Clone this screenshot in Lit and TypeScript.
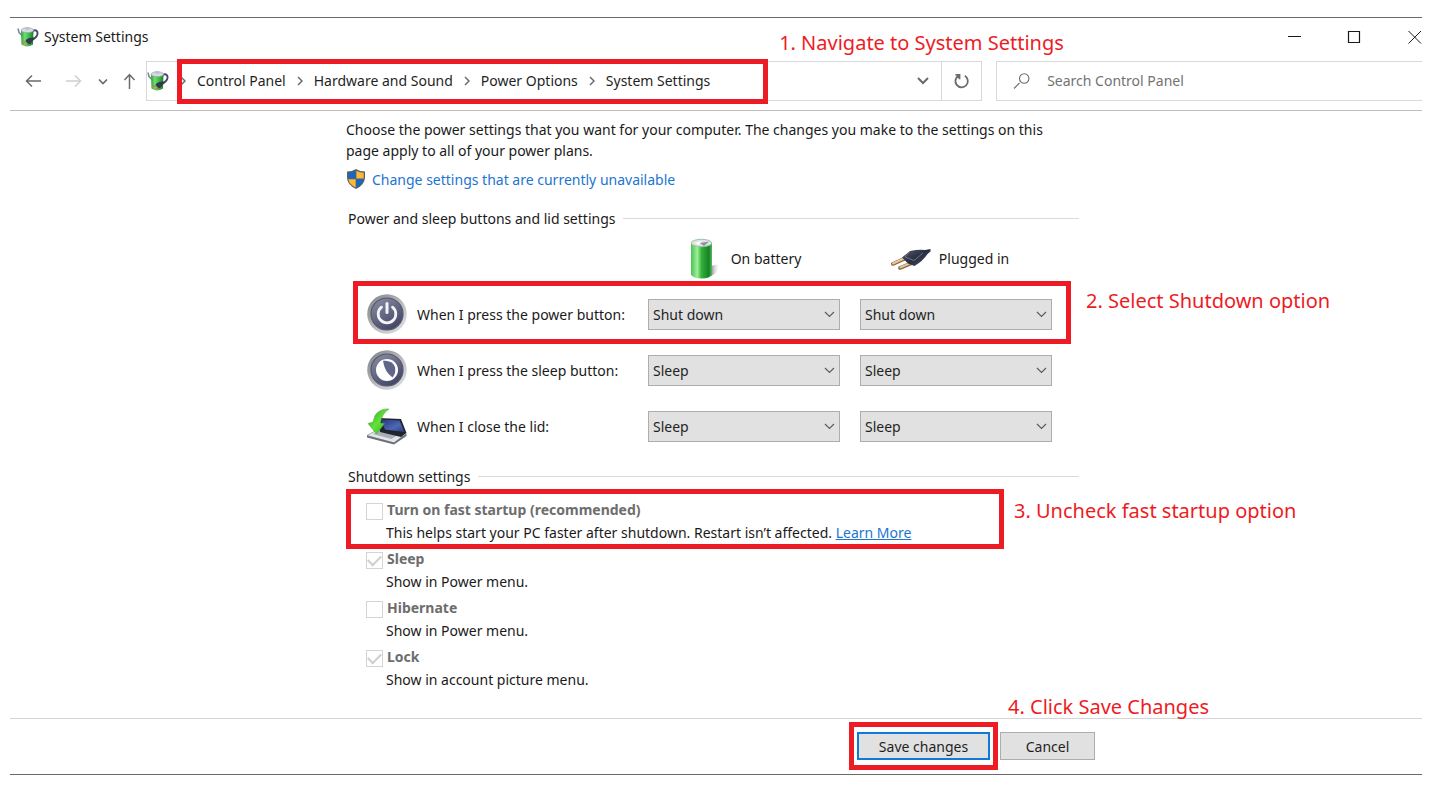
import { LitElement, html, css, svg, nothing } from "lit";
import { customElement, property } from "lit/decorators.js";

const kettleIcon = html`<svg width="22" height="22" viewBox="0 0 22 22" aria-hidden="true">
  <defs>
    <linearGradient id="kettle-body" x1="0" x2="1">
      <stop offset="0" stop-color="#2f9a3a" /><stop offset=".3" stop-color="#6be06f" />
      <stop offset=".7" stop-color="#35b443" /><stop offset="1" stop-color="#1f7a2c" />
    </linearGradient>
  </defs>
  <path d="M15.500 5C19.500 2.800 21.500 6 20 9.500C19 11.500 17.500 12.500 16 13.500" fill="none" stroke="#45486a" stroke-width="1.900" />
  <path d="M1 2.500L2 6.500L5 9.500" fill="none" stroke="#7d8696" stroke-width="1.500" />
  <path d="M4 4.500L4.500 18.500Q10 22.500 16 18.500L16.500 4.500Z" fill="url(#kettle-body)" />
  <ellipse cx="10.300" cy="4.200" rx="6.200" ry="2.500" fill="#d5dbe0" stroke="#8d98a0" stroke-width=".6" />
  <ellipse cx="10.300" cy="2.400" rx="2.500" ry="1.300" fill="#b9c1c9" />
  <path d="M8.500 14.500Q11 11 17.500 11.500L17 13.500Q15 15 14 17.500L11 18.500Z" fill="#343a4c" />
  <path d="M9 15.500L5 17.500M11 17.500L8 19.500" stroke="#b48a52" stroke-width="1.500" />
</svg>`;

const shieldIcon = html`<svg width="20" height="22" viewBox="0 0 20 22" aria-hidden="true">
  <path d="M10 1Q6 3.600 1 3.600V10Q1.500 17 10 21Q18.500 17 19 10V3.600Q14 3.600 10 1Z" fill="#5c6066" />
  <path d="M9.600 2.800Q6.500 4.600 2.300 4.800V10.500H9.600Z" fill="#1668c1" />
  <path d="M10.400 2.800Q13.500 4.600 17.700 4.800V10.500H10.400Z" fill="#fdb83b" />
  <path d="M2.400 11.300H9.600V19.400Q3.200 16.300 2.400 11.300Z" fill="#fdb83b" />
  <path d="M17.600 11.300H10.400V19.400Q16.800 16.300 17.600 11.300Z" fill="#1668c1" />
</svg>`;

const batteryIcon = html`<svg width="40" height="42" viewBox="0 0 40 42" aria-hidden="true">
  <defs>
    <linearGradient id="battery-body" x1="0" x2="1">
      <stop offset="0" stop-color="#4fc155" /><stop offset=".3" stop-color="#9df09b" />
      <stop offset=".5" stop-color="#35b13c" /><stop offset=".85" stop-color="#138322" />
      <stop offset="1" stop-color="#5bb562" />
    </linearGradient>
    <linearGradient id="battery-shadow" x1="0" x2="1">
      <stop offset="0" stop-color="#8a8a8a" /><stop offset="1" stop-color="#fff" stop-opacity="0" />
    </linearGradient>
  </defs>
  <path d="M28 28Q36 25 37 28Q36 34 28 38Z" fill="url(#battery-shadow)" />
  <path d="M8 5V36.500Q10 40.500 18.500 40.500Q27 40.500 29 36.500V5Z" fill="url(#battery-body)" />
  <ellipse cx="18.500" cy="5" rx="10.300" ry="3.700" fill="#dfe5e3" stroke="#9cc4a0" />
  <path d="M17 5L26 3.500L21 8Z" fill="#8d8da4" />
  <path d="M12 5L18 3L16 7Z" fill="#fff" />
</svg>`;

const plugIcon = html`<svg width="40" height="40" viewBox="0 0 40 40" aria-hidden="true">
  <defs>
    <linearGradient id="plug-body" x1="0" x2="1" y1="0" y2="1">
      <stop offset="0" stop-color="#565c70" /><stop offset=".5" stop-color="#2a2e42" />
      <stop offset="1" stop-color="#4b5168" />
    </linearGradient>
  </defs>
  <path d="M1.800 25L14 19.500M9 29L21 24" stroke="#8a6642" stroke-width="3.600" stroke-linecap="round" />
  <path d="M2 24.500L14 19M9.500 28.300L21 23.300" stroke="#e8c7a0" stroke-width="2" stroke-linecap="round" />
  <path d="M11 18.500L19 12Q28 10 34 11L39.500 10V12.500L36.500 15Q32 22 23.500 27L17 24.500Z" fill="url(#plug-body)" />
  <path d="M19 12.500L14 18L23 21.500L32 14" fill="none" stroke="#7d849b" stroke-width=".8" />
</svg>`;

const disc = (id: string) => svg`
  <defs>
    <linearGradient id=${id + "-face"} x1="0" y1="0" x2=".6" y2="1">
      <stop offset="0" stop-color="#8d90a6" /><stop offset="1" stop-color="#454768" />
    </linearGradient>
    <linearGradient id=${id + "-rim"} x1="0" y1="0" x2="1" y2="1">
      <stop offset="0" stop-color="#7c7e80" /><stop offset=".6" stop-color="#bfc1c4" />
      <stop offset="1" stop-color="#e4e5e7" />
    </linearGradient>
  </defs>
  <circle cx="20" cy="20" r="19.800" fill=${`url(#${id}-rim)`} />
  <circle cx="20" cy="20" r="16" fill=${`url(#${id}-face)`} stroke="#55576f" stroke-width="1.200" />`;

const powerIcon = html`<svg width="40" height="40" viewBox="0 0 40 40" aria-hidden="true">
  ${disc("power")}
  <path d="M14.500 13.200A8.800 8.800 0 1 0 25.500 13.200" fill="none" stroke="#f4f4f8" stroke-width="2.800" stroke-linecap="round" />
  <path d="M20 9.500V18.500" stroke="#f4f4f8" stroke-width="3" stroke-linecap="round" />
</svg>`;

const moonIcon = html`<svg width="40" height="40" viewBox="0 0 40 40" aria-hidden="true">
  ${disc("moon")}
  <circle cx="20" cy="20" r="11" fill="#fff" />
  <path d="M16 10.800Q25 9.800 28 17Q29.200 23 25.500 27.500Q17.500 22 16 10.800Z" fill="#62658a" />
</svg>`;

const lidIcon = html`<svg width="40" height="40" viewBox="0 0 40 40" aria-hidden="true">
  <defs>
    <linearGradient id="lid-screen" x1="0" y1="0" x2="1" y2="1">
      <stop offset="0" stop-color="#26357c" /><stop offset=".6" stop-color="#4e68b4" />
      <stop offset="1" stop-color="#2a3870" />
    </linearGradient>
    <linearGradient id="lid-arrow" x1="0" y1="0" x2="1" y2="1">
      <stop offset="0" stop-color="#2e9e1d" /><stop offset=".5" stop-color="#62e23c" />
      <stop offset="1" stop-color="#2fae1d" />
    </linearGradient>
  </defs>
  <path d="M0 29.500L10 24L36 30L27 37Z" fill="#e4e6ea" stroke="#888d97" stroke-width=".7" />
  <path d="M0 29.500L27 36.500L39.500 27.500V30L27 38.500L0 31.500Z" fill="#6b707b" />
  <path d="M6 28L12 25L30 29.500L24.500 33Z" fill="#a9aeb7" />
  <path d="M11 12L34 13L39.500 27L34 31L13 26Z" fill="#20242f" />
  <path d="M14 13.500L32.500 14.500L37.500 26L18 23.500Z" fill="url(#lid-screen)" />
  <path d="M22 3Q13 2 8 9.500L6 16L1 17.500L9.500 28L17.500 17.500L13.500 17Q14.500 8 22 3Z" fill="url(#lid-arrow)" stroke="#4aa43c" stroke-width=".5" />
</svg>`;

const glyph = (d: string, w: number, h: number, stroke = 1) => html`<svg
  width=${w} height=${h} viewBox=${`0 0 ${w} ${h}`} aria-hidden="true"
  fill="none" stroke="currentColor" stroke-width=${stroke}><path d=${d} /></svg>`;

/** A tutorial marker: a red frame over its parent, with a caption beside it. */
@customElement("step-mark")
export class StepMark extends LitElement {
  @property() text = "";
  static styles = css`
    :host {
      position: absolute;
      box-sizing: border-box;
      border: 5px solid #ed1c24;
      pointer-events: none;
      z-index: 2;
    }
    .caption {
      position: absolute;
      left: 100%;
      top: var(--caption-top, 0);
      margin-left: var(--caption-gap, 16px);
      color: #ed1c24;
      font: 20px/24px "Noto Sans", "Open Sans", sans-serif;
      white-space: nowrap;
    }
  `;
  render() {
    return html`<span class="caption">${this.text}</span>`;
  }
}

interface PowerRow {
  id: string;
  label: string;
  icon: unknown;
  value: string;
  marked?: boolean;
}

interface ShutdownItem {
  id: string;
  title: string;
  note: string;
  checked: boolean;
  link?: string;
}

@customElement("app-root")
export class AppRoot extends LitElement {
  private crumbs = ["Control Panel", "Hardware and Sound", "Power Options", "System Settings"];

  private rows: PowerRow[] = [
    { id: "power", label: "When I press the power button:", icon: powerIcon, value: "Shut down", marked: true },
    { id: "sleep", label: "When I press the sleep button:", icon: moonIcon, value: "Sleep" },
    { id: "lid", label: "When I close the lid:", icon: lidIcon, value: "Sleep" },
  ];

  private items: ShutdownItem[] = [
    { id: "fast", title: "Turn on fast startup (recommended)", note: "This helps start your PC faster after shutdown. Restart isn’t affected.", checked: false, link: "Learn More" },
    { id: "s-sleep", title: "Sleep", note: "Show in Power menu.", checked: true },
    { id: "hibernate", title: "Hibernate", note: "Show in Power menu.", checked: false },
    { id: "lock", title: "Lock", note: "Show in account picture menu.", checked: true },
  ];

  static styles = css`
    :host {
      display: block;
      padding: 17px 32px 26px 10px;
      background: #fff;
      color: #1a1a1a;
      font: 14px/21px "Noto Sans", "Open Sans", sans-serif;
    }
    * { box-sizing: border-box; }
    svg { display: block; flex: none; }
    button, input, select { font: inherit; color: inherit; margin: 0; }
    .window { border: solid #6a6a6a; border-width: 1px 0; }
    .plain {
      display: flex;
      align-items: center;
      justify-content: center;
      border: 0;
      padding: 0;
      background: none;
    }

    .titlebar { display: flex; align-items: center; height: 38px; padding-left: 7px; }
    .titlebar h1 { margin: 0 auto 0 5px; padding-bottom: 2px; font-size: 14px; font-weight: 400; }
    .controls { display: flex; gap: 45px; }

    .nav {
      display: flex;
      padding: 5px 0 9px 3px;
      border-bottom: 1px solid #bdbdbd;
      color: #6b6b6b;
    }
    .wide { width: 40px; }
    .history { width: 20px; }
    .up { width: 33px; }
    .faded { color: #cfcfcf; }
    .address {
      position: relative;
      display: flex;
      flex: 51 1 0;
      height: 40px;
      border: 1px solid #d9d9d9;
    }
    .crumbs { display: flex; flex: 1; align-items: center; }
    .crumbs ol { display: flex; margin: 0; padding: 0; list-style: none; }
    .crumbs li { display: flex; align-items: center; }
    .crumbs a { padding-bottom: 2px; color: #1f1f1f; text-decoration: none; white-space: nowrap; }
    .sep { display: flex; justify-content: center; width: 28px; }
    .drop { width: 36px; }
    .refresh { width: 40px; border-left: 1px solid #d9d9d9; }
    .search {
      display: flex;
      flex: 25 1 0;
      align-items: center;
      margin-left: 14px;
      padding-left: 16px;
      gap: 17px;
      border: 1px solid #d9d9d9;
      border-right: 0;
    }
    .search input { flex: 1; min-width: 0; padding: 0 0 2px; border: 0; outline: 0; background: none; }
    .search input::placeholder { color: #737373; opacity: 1; }

    main { max-width: 740px; margin: 0 auto; padding: 8px 7px 27px 0; }
    .intro { margin: 0; }
    .admin { display: flex; align-items: center; gap: 6px; margin: 7px 0 18px; }
    a { color: #1c75d0; }
    .admin a { text-decoration: none; }
    .group { display: flex; align-items: center; gap: 8px; margin: 0 0 0 2px; font-size: 14px; font-weight: 400; }
    .group::after { content: ""; flex: 1; border-top: 1px solid #dadada; }

    .power { padding: 9px 0 12px 21px; }
    .line {
      position: relative;
      display: grid;
      grid-template-columns: 40px 201px 192px 192px;
      column-gap: 20px;
      align-items: center;
      height: 56px;
    }
    .line label { margin-left: -10px; white-space: nowrap; }
    .head { grid-template-columns: 261px 188px 188px; height: 48px; align-items: start; }
    .source { display: flex; align-items: center; justify-content: center; gap: 8px; height: 41px; }
    .pick { position: relative; display: block; height: 31px; color: #5c5c5c; }
    .pick select {
      display: block;
      width: 100%;
      height: 100%;
      padding: 0 28px 0 4px;
      border: 1px solid #adadad;
      border-radius: 0;
      appearance: none;
      background: #e1e1e1;
      color: #1f1f1f;
    }
    .pick svg { position: absolute; right: 5px; top: 12px; pointer-events: none; }

    .shutdown { position: relative; }
    .options { display: grid; gap: 4px; margin: 0; padding: 12px 0 0 20px; list-style: none; }
    .option { display: grid; grid-template-columns: 17px 1fr; gap: 1px 3px; }
    .option label { margin-left: 1px; line-height: 22px; font-weight: 700; color: #6d6d6d; }
    .option p { grid-column: 2; margin: 0; line-height: 22px; }
    .option input {
      appearance: none;
      display: grid;
      place-items: center;
      width: 17px;
      height: 17px;
      margin-top: 4px;
      border: 1px solid #d4d4d4;
      background: #fff;
    }
    .option input:checked::after {
      content: "";
      width: 11px;
      height: 6px;
      margin-bottom: 4px;
      border: solid #cfcfcf;
      border-width: 0 0 2px 2px;
      transform: rotate(-45deg);
    }

    footer { border-top: 1px solid #d4d4d4; }
    .actions { display: flex; justify-content: flex-end; gap: 10px; padding: 13px 327px 14px 0; }
    .actions span { position: relative; display: block; }
    .btn { display: block; height: 28px; padding: 0; border: 1px solid #adadad; background: #e1e1e1; color: #1f1f1f; }
    .save { width: 133px; border: 2px solid #0f7ad8; }
    .cancel { width: 95px; }

    .mark-path { inset: -3px 213px -4px 30px; --caption-gap: 16px; --caption-top: -33px; }
    .mark-row { inset: -5px 8px -2px -14px; --caption-gap: 20px; --caption-top: 3px; }
    .mark-fast { inset: 2px 75px auto 0; height: 60px; --caption-top: 5px; --caption-gap: 15px; }
    .mark-save { inset: -10px -8px; --caption-top: -32px; --caption-gap: 15px; }
  `;

  private renderRow(row: PowerRow) {
    const pick = (source: string, name: string) => html`<span class="pick">
      <select id=${`${row.id}-${source}`} aria-label=${`${row.label} ${name}`}>
        <option>${row.value}</option>
        <option>${row.value === "Sleep" ? "Shut down" : "Sleep"}</option>
        <option>Do nothing</option>
      </select>
      ${glyph("M1 1L5.500 5.500L10 1", 11, 8, 1.2)}
    </span>`;
    return html`<div class="line">
      ${row.icon}
      <label for=${`${row.id}-battery`}>${row.label}</label>
      ${pick("battery", "On battery")}
      ${pick("plugged", "Plugged in")}
      ${row.marked ? html`<step-mark class="mark-row" text="2. Select Shutdown option"></step-mark>` : nothing}
    </div>`;
  }

  render() {
    return html`<div class="window">
      <header>
        <div class="titlebar">
          ${kettleIcon}
          <h1>System Settings</h1>
          <div class="controls">
            <button class="plain" aria-label="Minimize">${glyph("M1 6.500H14", 15, 15)}</button>
            <button class="plain" aria-label="Maximize">${glyph("M1.500 1.500H12.500V12.500H1.500Z", 15, 15, 1.2)}</button>
            <button class="plain" aria-label="Close">${glyph("M1.500 1L14 13.500M14 1L1.500 13.500", 15, 15)}</button>
          </div>
        </div>
        <nav class="nav">
          <button class="plain wide" aria-label="Back">${glyph("M16 8H1.500M7 2.500L1.500 8L7 13.500", 17, 16, 1.5)}</button>
          <button class="plain wide faded" aria-label="Forward">${glyph("M1 8H15.500M10 2.500L15.500 8L10 13.500", 17, 16, 1.5)}</button>
          <button class="plain history" aria-label="Recent locations">${glyph("M1 1.500L5 5.500L9 1.500", 10, 7, 1.7)}</button>
          <button class="plain up" aria-label="Up">${glyph("M6.500 16V1.500M1.500 7L6.500 1.500L11.500 7", 13, 17, 1.5)}</button>
          <div class="address">
            <div class="crumbs">
              ${kettleIcon}
              <ol>
                ${this.crumbs.map((c) => html`<li><span class="sep">${glyph("M1 1L5 5L1 9", 6, 10, 1.5)}</span><a href="#">${c}</a></li>`)}
              </ol>
            </div>
            <button class="plain drop" aria-label="Previous locations">${glyph("M1 1L6 6L11 1", 12, 8, 2)}</button>
            <button class="plain refresh" aria-label="Refresh">${glyph("M2.500 1.800H6.500V6.200M5.800 2.600A6.200 6.200 0 1 0 11.800 2.800", 17, 17, 1.8)}</button>
            <step-mark class="mark-path" text="1. Navigate to System Settings"></step-mark>
          </div>
          <div class="search">
            ${glyph("M6.500 10L1 15.500M6.500 5.500A4.700 4.700 0 1 1 15.900 5.500A4.700 4.700 0 1 1 6.500 5.500", 17, 17, 1.1)}
            <input type="search" placeholder="Search Control Panel" aria-label="Search Control Panel" />
          </div>
        </nav>
      </header>
      <main>
        <p class="intro">Choose the power settings that you want for your computer. The changes you make to the settings on this page apply to all of your power plans.</p>
        <p class="admin">${shieldIcon}<a href="#">Change settings that are currently unavailable</a></p>
        <h2 class="group">Power and sleep buttons and lid settings</h2>
        <section class="power">
          <div class="line head">
            <span></span>
            <span class="source">${batteryIcon}On battery</span>
            <span class="source">${plugIcon}Plugged in</span>
          </div>
          ${this.rows.map((r) => this.renderRow(r))}
        </section>
        <h2 class="group">Shutdown settings</h2>
        <section class="shutdown">
          <ul class="options">
            ${this.items.map((i) => html`<li class="option">
              <input type="checkbox" id=${i.id} .checked=${i.checked} disabled />
              <label for=${i.id}>${i.title}</label>
              <p>${i.note}${i.link ? html` <a href="#">${i.link}</a>` : nothing}</p>
            </li>`)}
          </ul>
          <step-mark class="mark-fast" text="3. Uncheck fast startup option"></step-mark>
        </section>
      </main>
      <footer>
        <div class="actions">
          <span>
            <button class="btn save">Save changes</button>
            <step-mark class="mark-save" text="4. Click Save Changes"></step-mark>
          </span>
          <button class="btn cancel">Cancel</button>
        </div>
      </footer>
    </div>`;
  }
}
